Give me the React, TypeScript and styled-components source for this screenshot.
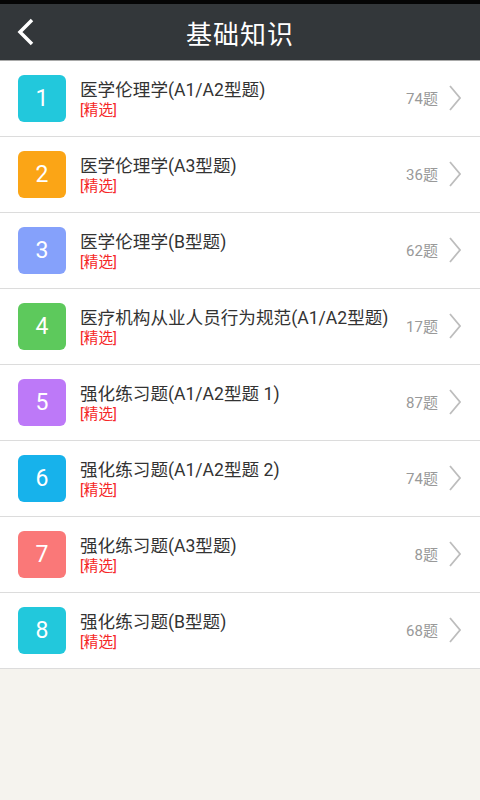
import * as React from 'react'
import styled, { createGlobalStyle } from 'styled-components'

// ***** Global
const GlobalStyle = createGlobalStyle`
  html, body {
    margin: 0;
    padding: 0;
    background: #f5f3ee;
    font-family: Roboto, "Noto Sans CJK SC", sans-serif;
  }
`

// ***** Styled Components
const Page = styled.div`
  width: 480px;
  min-height: 800px;
  background: #f5f3ee;
  display: flex;
  flex-direction: column;
`

const StatusStrip = styled.div`
  height: 4px;
  background: #050505;
`

const Header = styled.header`
  height: 56px;
  background: #33373a;
  border-bottom: 1px solid #a9aaa9;
  display: flex;
  align-items: center;
  justify-content: center;
  position: relative;
`

const BackButton = styled.div`
  position: absolute;
  left: 12px;
  top: 12px;
  width: 28px;
  height: 32px;
  display: flex;
  align-items: center;
  justify-content: center;
`

const Title = styled.h1`
  margin: 0;
  color: #ffffff;
  font-size: 26px;
  font-weight: 400;
  letter-spacing: 1px;
`

const List = styled.ul`
  list-style: none;
  margin: 0;
  padding: 0;
  background: #ffffff;
`

const Row = styled.li`
  height: 75px;
  display: flex;
  align-items: center;
  padding: 0 18px;
  border-bottom: 1px solid #dcdcdc;
`

const Badge = styled.div<{ $color: string }>`
  width: 48px;
  height: 47px;
  border-radius: 6px;
  background: ${(p) => p.$color};
  color: #ffffff;
  font-size: 23px;
  display: flex;
  align-items: center;
  justify-content: center;
  flex-shrink: 0;
`

const TextBlock = styled.div`
  flex: 1;
  margin-left: 14px;
  padding-top: 2px;
  display: flex;
  flex-direction: column;
  min-width: 0;
`

const ItemTitle = styled.div`
  color: #333333;
  font-size: 17.6px;
  line-height: 20px;
  white-space: nowrap;
`

const Tag = styled.div`
  color: #f52727;
  font-size: 14.6px;
  line-height: 20px;
`

const Count = styled.div`
  color: #999999;
  font-size: 15px;
  margin-bottom: 3px;
  flex-shrink: 0;
`

const Arrow = styled.div`
  margin-left: 11px;
  width: 13px;
  margin-bottom: 2px;
  display: flex;
  align-items: center;
`

// ***** Data
const items = [
  { title: '医学伦理学(A1/A2型题)', count: 74, color: '#22c8dc' },
  { title: '医学伦理学(A3型题)', count: 36, color: '#fba516' },
  { title: '医学伦理学(B型题)', count: 62, color: '#85a1fb' },
  { title: '医疗机构从业人员行为规范(A1/A2型题)', count: 17, color: '#5dc95c' },
  { title: '强化练习题(A1/A2型题 1)', count: 87, color: '#bd79f8' },
  { title: '强化练习题(A1/A2型题 2)', count: 74, color: '#17b2eb' },
  { title: '强化练习题(A3型题)', count: 8, color: '#fa7878' },
  { title: '强化练习题(B型题)', count: 68, color: '#22c8dc' },
]

// ***** Component
export default function App() {
  return (
    <Page>
      <GlobalStyle />
      <StatusStrip />
      <Header>
        <BackButton>
          <svg width="20" height="30" viewBox="0 0 20 30">
            <polyline
              points="16,3 4,15 16,27"
              fill="none"
              stroke="#ffffff"
              strokeWidth="3.5"
            />
          </svg>
        </BackButton>
        <Title>基础知识</Title>
      </Header>
      <List>
        {items.map((it, i) => (
          <Row key={i}>
            <Badge $color={it.color}>{i + 1}</Badge>
            <TextBlock>
              <ItemTitle>{it.title}</ItemTitle>
              <Tag>[精选]</Tag>
            </TextBlock>
            <Count>{it.count}题</Count>
            <Arrow>
              <svg width="12" height="26" viewBox="0 0 12 26">
                <polyline
                  points="1,1 11,13 1,25"
                  fill="none"
                  stroke="#bdbdbd"
                  strokeWidth="1.8"
                />
              </svg>
            </Arrow>
          </Row>
        ))}
      </List>
    </Page>
  )
}
